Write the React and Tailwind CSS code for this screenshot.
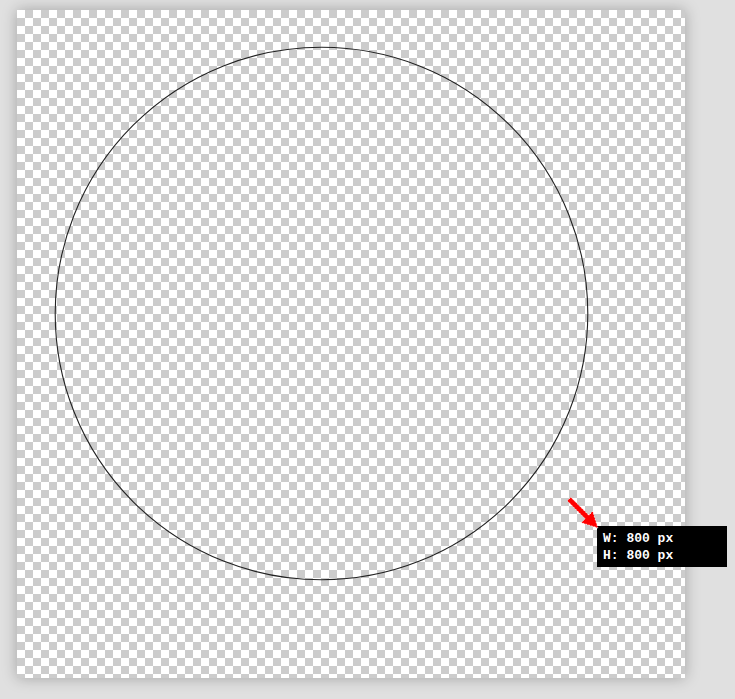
export default function App() {
  return (
    <div className="w-[735px] h-[699px] bg-[#e0e0e0] pl-[17px] pt-[10px] overflow-hidden">
      <div className="relative w-[668px] h-[668px] bg-[conic-gradient(#cccccc_25%,#ffffff_0_50%,#cccccc_0_75%,#ffffff_0)] bg-[length:16px_16px] shadow-[0_0_14px_rgba(0,0,0,0.28)]">
        <svg className="absolute inset-0" width="668" height="668" viewBox="0 0 668 668">
          <circle cx="304.5" cy="303.5" r="266.3" fill="none" stroke="#222" strokeWidth="1.1" />
        </svg>
        <div className="absolute left-[580px] top-[516px] w-[130px] h-[41px] bg-black px-[6px] pt-[4px] font-['Liberation_Mono',monospace] font-bold text-[13px] leading-[17px] text-white whitespace-pre">
          <div>W: 800 px</div>
          <div>H: 800 px</div>
        </div>
        <svg className="absolute inset-0 overflow-visible" width="668" height="668" viewBox="0 0 668 668">
          <polygon
            points="553.8,487.2 571.8,505.2 575.7,501.3 581,518 564.3,512.7 568.2,508.8 550.2,490.8"
            fill="#ff0000"
            stroke="#ffffff"
            strokeWidth="0.8"
            strokeDasharray="1.5 1.5"
          />
        </svg>
      </div>
    </div>
  );
}
